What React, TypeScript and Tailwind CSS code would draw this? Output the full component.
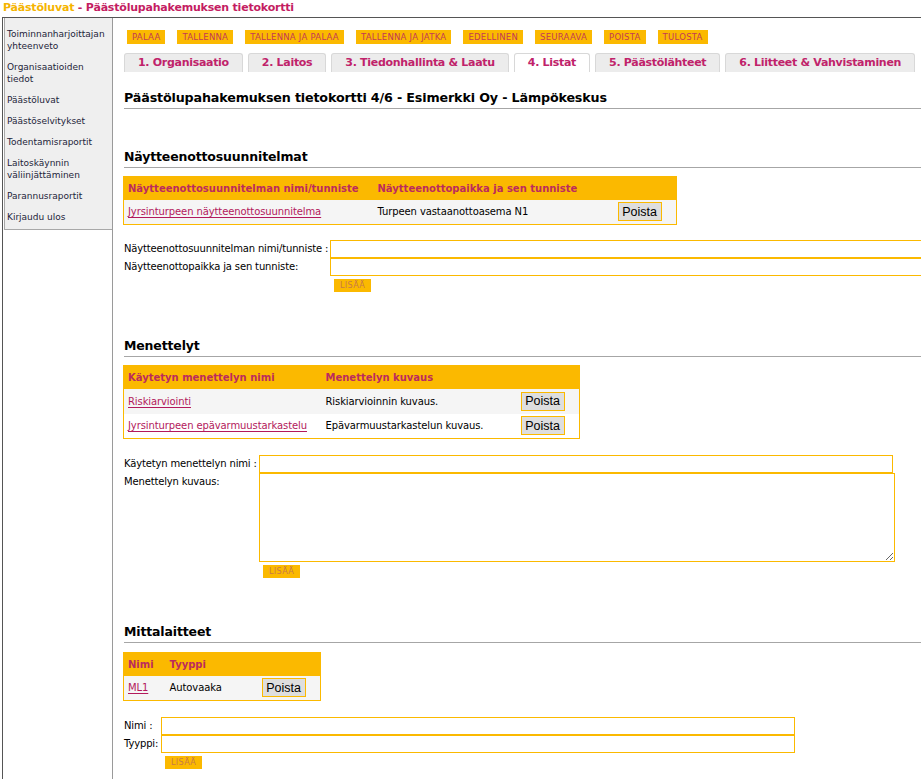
import React from "react";

const ORANGE = "border-[#fbb900]";

const menu = [
  "Toiminnanharjoittajan yhteenveto",
  "Organisaatioiden tiedot",
  "Päästöluvat",
  "Päästöselvitykset",
  "Todentamisraportit",
  "Laitoskäynnin väliinjättäminen",
  "Parannusraportit",
  "Kirjaudu ulos",
];

const actions = [
  "Palaa",
  "Tallenna",
  "Tallenna ja palaa",
  "Tallenna ja jatka",
  "Edellinen",
  "Seuraava",
  "Poista",
  "Tulosta",
];

const tabs = [
  "1. Organisaatio",
  "2. Laitos",
  "3. Tiedonhallinta & Laatu",
  "4. Listat",
  "5. Päästölähteet",
  "6. Liitteet & Vahvistaminen",
];

function Section({ title, className }: { title: string; className?: string }) {
  return (
    <h2
      className={`font-bold text-black leading-[16px] pb-[2px] border-b border-[#a6a6a6] whitespace-nowrap ${className ?? ""}`}
    >
      {title}
    </h2>
  );
}

function PoistaButton() {
  return (
    <button
      className={`h-[19px] w-[44px] border ${ORANGE} bg-[#dedede] text-[12.5px] leading-[16px] tracking-normal text-black font-['Liberation_Sans',Arial,sans-serif]`}
    >
      Poista
    </button>
  );
}

function LisaaButton() {
  return (
    <button className="mt-[3px] ml-[4px] h-[13px] w-[37px] bg-[#fbb900] text-[8px] leading-[13px] tracking-[0.4px] text-[#c87a48]">
      LISÄÄ
    </button>
  );
}

function Input({ width, className }: { width: number; className?: string }) {
  return (
    <div
      className={`h-[18px] border ${ORANGE} bg-white shrink-0 ${className ?? ""}`}
      style={{ width }}
    />
  );
}

type Col = { label: string; width: number };

function DataTable({
  cols,
  rows,
  striped,
}: {
  cols: Col[];
  rows: { link: string; text: string }[];
  striped?: boolean[];
}) {
  return (
    <table className={`border ${ORANGE} border-collapse text-[10px] tracking-[-0.1px] whitespace-nowrap`}>
      <thead>
        <tr className="bg-[#fbb900] h-[23px]">
          {cols.map((c, i) => (
            <th
              key={i}
              className="text-left font-bold text-[#bb2b5e] pl-[4px] align-middle tracking-normal"
              style={{ width: c.width }}
            >
              {c.label}
            </th>
          ))}
        </tr>
      </thead>
      <tbody>
        {rows.map((r, i) => (
          <tr
            key={i}
            className={`h-[25px] ${striped?.[i] === false ? "bg-white" : "bg-[#f5f5f5]"}`}
          >
            <td className="pl-[4px] align-middle">
              <a className="text-[#b3195c] underline underline-offset-[2px]">{r.link}</a>
            </td>
            <td className="pl-[4px] align-middle text-black">{r.text}</td>
            <td className="pl-[4px] align-middle">
              <PoistaButton />
            </td>
          </tr>
        ))}
      </tbody>
    </table>
  );
}

export default function App() {
  return (
    <div className="w-[921px] h-[779px] overflow-hidden bg-white font-['DejaVu_Sans',Verdana,sans-serif] text-black">
      <div className="h-[17px] pl-[3px] text-[11px] tracking-[-0.2px] font-bold leading-[16px] whitespace-nowrap">
        <span className="text-[#f5b400]">Päästöluvat</span>
        <span className="text-[#c41d62]"> - Päästölupahakemuksen tietokortti</span>
      </div>

      <div className="flex ml-[2px] border-l border-t border-[#555] h-full">
        {/* sidebar */}
        <div className="w-[110px] shrink-0 border-r border-[#9a9a9a]">
          <nav className="ml-[1px] bg-[#efefef] border-l border-b border-[#a8a8a8] pl-[2px] pt-[10px] pb-[6px] text-[9px] leading-[12px] text-[#1e1e3a]">
            <ul className="flex flex-col gap-[9px]">
              {menu.map((m) => (
                <li key={m}>{m}</li>
              ))}
            </ul>
          </nav>
        </div>

        {/* main */}
        <div className="flex-1 min-w-0 pl-[11px] pt-[12px] text-[10px] tracking-[-0.15px] leading-[13px]">
          <div className="flex gap-[12px] pl-[3px]">
            {actions.map((a) => (
              <button
                key={a}
                className="h-[14px] px-[5px] bg-[#fbb900] text-[8.5px] leading-[14px] tracking-[0.25px] uppercase text-[#c33a55] whitespace-nowrap"
              >
                {a}
              </button>
            ))}
          </div>

          <div className="flex gap-[5px] mt-[9px] h-[19px]">
            {tabs.map((t, i) => (
              <div
                key={t}
                className={`px-[13px] rounded-t-[3px] border border-b-0 border-[#d8d8d8] text-[11px] tracking-[-0.3px] font-bold leading-[18px] text-[#c0226a] whitespace-nowrap ${
                  i === 3 ? "bg-white" : "bg-[#ececec]"
                }`}
              >
                {t}
              </div>
            ))}
          </div>

          <Section
            title="Päästölupahakemuksen tietokortti 4/6 - Esimerkki Oy - Lämpökeskus"
            className="mt-[18px] text-[12.7px]"
          />

          <Section title="Näytteenottosuunnitelmat" className="mt-[40px] text-[12.5px]" />
          <div className="mt-[8px] -ml-[1px]">
            <DataTable
              cols={[
                { label: "Näytteenottosuunnitelman nimi/tunniste", width: 250 },
                { label: "Näytteenottopaikka ja sen tunniste", width: 240 },
                { label: "", width: 63 },
              ]}
              rows={[{ link: "Jyrsinturpeen näytteenottosuunnitelma", text: "Turpeen vastaanottoasema N1" }]}
            />
          </div>

          <div className="mt-[15px] flex">
            <div className="w-[206px] shrink-0 flex flex-col whitespace-nowrap">
              <span className="h-[18px] pt-[2px]">Näytteenottosuunnitelman nimi/tunniste :</span>
              <span className="h-[18px] pt-[2px]">Näytteenottopaikka ja sen tunniste:</span>
            </div>
            <div className="flex flex-col">
              <Input width={634} />
              <Input width={634} />
              <LisaaButton />
            </div>
          </div>

          <Section title="Menettelyt" className="mt-[46px] text-[12.5px]" />
          <div className="mt-[8px] -ml-[1px]">
            <DataTable
              cols={[
                { label: "Käytetyn menettelyn nimi", width: 198 },
                { label: "Menettelyn kuvaus", width: 195 },
                { label: "", width: 63 },
              ]}
              rows={[
                { link: "Riskiarviointi", text: "Riskiarvioinnin kuvaus." },
                { link: "Jyrsinturpeen epävarmuustarkastelu", text: "Epävarmuustarkastelun kuvaus." },
              ]}
              striped={[true, false]}
            />
          </div>

          <div className="mt-[16px] flex">
            <div className="w-[135px] shrink-0 flex flex-col whitespace-nowrap">
              <span className="h-[18px] pt-[2px]">Käytetyn menettelyn nimi :</span>
              <span className="h-[18px] pt-[2px]">Menettelyn kuvaus:</span>
            </div>
            <div className="flex flex-col">
              <Input width={634} />
              <textarea
                className={`block w-[636px] h-[89px] border ${ORANGE} bg-white outline-none resize`}
              />
              <LisaaButton />
            </div>
          </div>

          <Section title="Mittalaitteet" className="mt-[46px] text-[12.5px]" />
          <div className="mt-[9px] -ml-[1px]">
            <DataTable
              cols={[
                { label: "Nimi", width: 42 },
                { label: "Tyyppi", width: 92 },
                { label: "", width: 63 },
              ]}
              rows={[{ link: "ML1", text: "Autovaaka" }]}
            />
          </div>

          <div className="mt-[16px] flex">
            <div className="w-[37px] shrink-0 flex flex-col whitespace-nowrap">
              <span className="h-[18px] pt-[2px]">Nimi :</span>
              <span className="h-[18px] pt-[2px]">Tyyppi:</span>
            </div>
            <div className="flex flex-col">
              <Input width={634} />
              <Input width={634} />
              <LisaaButton />
            </div>
          </div>
        </div>
      </div>
    </div>
  );
}
